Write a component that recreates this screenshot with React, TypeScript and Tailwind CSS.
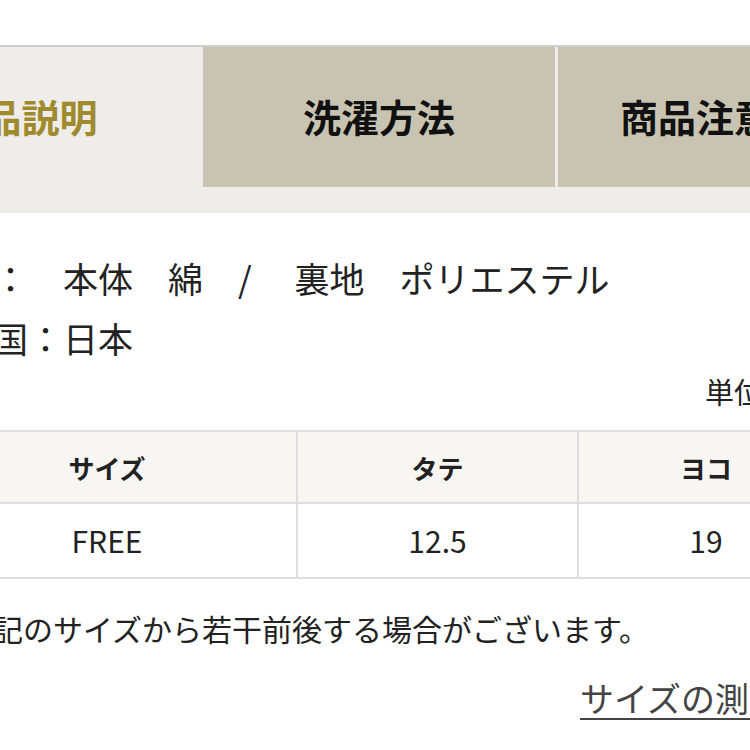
import React from 'react';

const tabs = [
  { label: '商品説明', active: true },
  { label: '洗濯方法', active: false },
  { label: '商品注意事項', active: false },
];

const columns = [
  { head: 'サイズ', value: 'FREE', width: 'w-[378px]' },
  { head: 'タテ', value: '12.5', width: 'w-[281px]' },
  { head: 'ヨコ', value: '19', width: 'w-[256px]' },
];

export default function App() {
  return (
    <div className="w-[750px] h-[750px] overflow-hidden bg-white font-['Noto_Sans_CJK_JP','Noto_Sans',sans-serif] text-[#222]">
      {/* Tabs */}
      <div className="mt-[45px] h-[168px] border-t-2 border-[#cdcdcd] bg-[#eeede9] overflow-hidden">
        <div className="flex -ml-[160px] w-[1100px]">
          {tabs.map((t, i) => (
            <div
              key={t.label}
              className={`h-[140px] shrink-0 flex items-center justify-center pb-[4px] text-[38px] font-bold whitespace-nowrap ${
                t.active ? 'w-[363px] bg-[#eeede9] text-[#a08a2e]' : 'w-[352px] bg-[#c9c4b1] text-[#111]'
              } ${i === 2 ? 'ml-[3px]' : ''}`}
            >
              {t.label}
            </div>
          ))}
        </div>
      </div>

      {/* Material / origin */}
      <div className="mt-[35px] -ml-[77px] text-[35px] leading-[60px] whitespace-nowrap">
        <p>素材：　本体　綿　/ 　裏地　ポリエステル</p>
        <p>原産国：日本</p>
      </div>

      <p className="mt-[8px] pl-[705px] text-[29px] leading-[30px] whitespace-nowrap">単位：cm</p>

      {/* Size table */}
      <div className="mt-[24px] -ml-[82px] w-[1000px]">
        <div className="flex border-y-2 border-[#dedede] bg-[#f7f6f3]">
          {columns.map((c, i) => (
            <div
              key={c.head}
              className={`${c.width} shrink-0 h-[70px] flex items-center justify-center text-[26px] font-bold ${
                i > 0 ? 'border-l-2 border-[#dedede]' : ''
              }`}
            >
              {c.head}
            </div>
          ))}
        </div>
        <div className="flex border-b-2 border-[#dedede]">
          {columns.map((c, i) => (
            <div
              key={c.head}
              className={`${c.width} shrink-0 h-[73px] flex items-center justify-center text-[30px] ${
                i > 0 ? 'border-l-2 border-[#dedede]' : ''
              }`}
            >
              {c.value}
            </div>
          ))}
        </div>
      </div>

      <p className="mt-[29px] -ml-[67px] text-[30px] leading-[40px] whitespace-nowrap">
        ※上記のサイズから若干前後する場合がございます。
      </p>

      <p className="mt-[28px] pl-[580px] text-[34px] leading-[44px] whitespace-nowrap">
        <a href="#" className="underline underline-offset-[6px] decoration-2 text-[#444]">
          サイズの測り方
        </a>
      </p>

      <div className="mt-[37px] h-[4px] border-t-2 border-[#555] bg-[#eee]" />
    </div>
  );
}
